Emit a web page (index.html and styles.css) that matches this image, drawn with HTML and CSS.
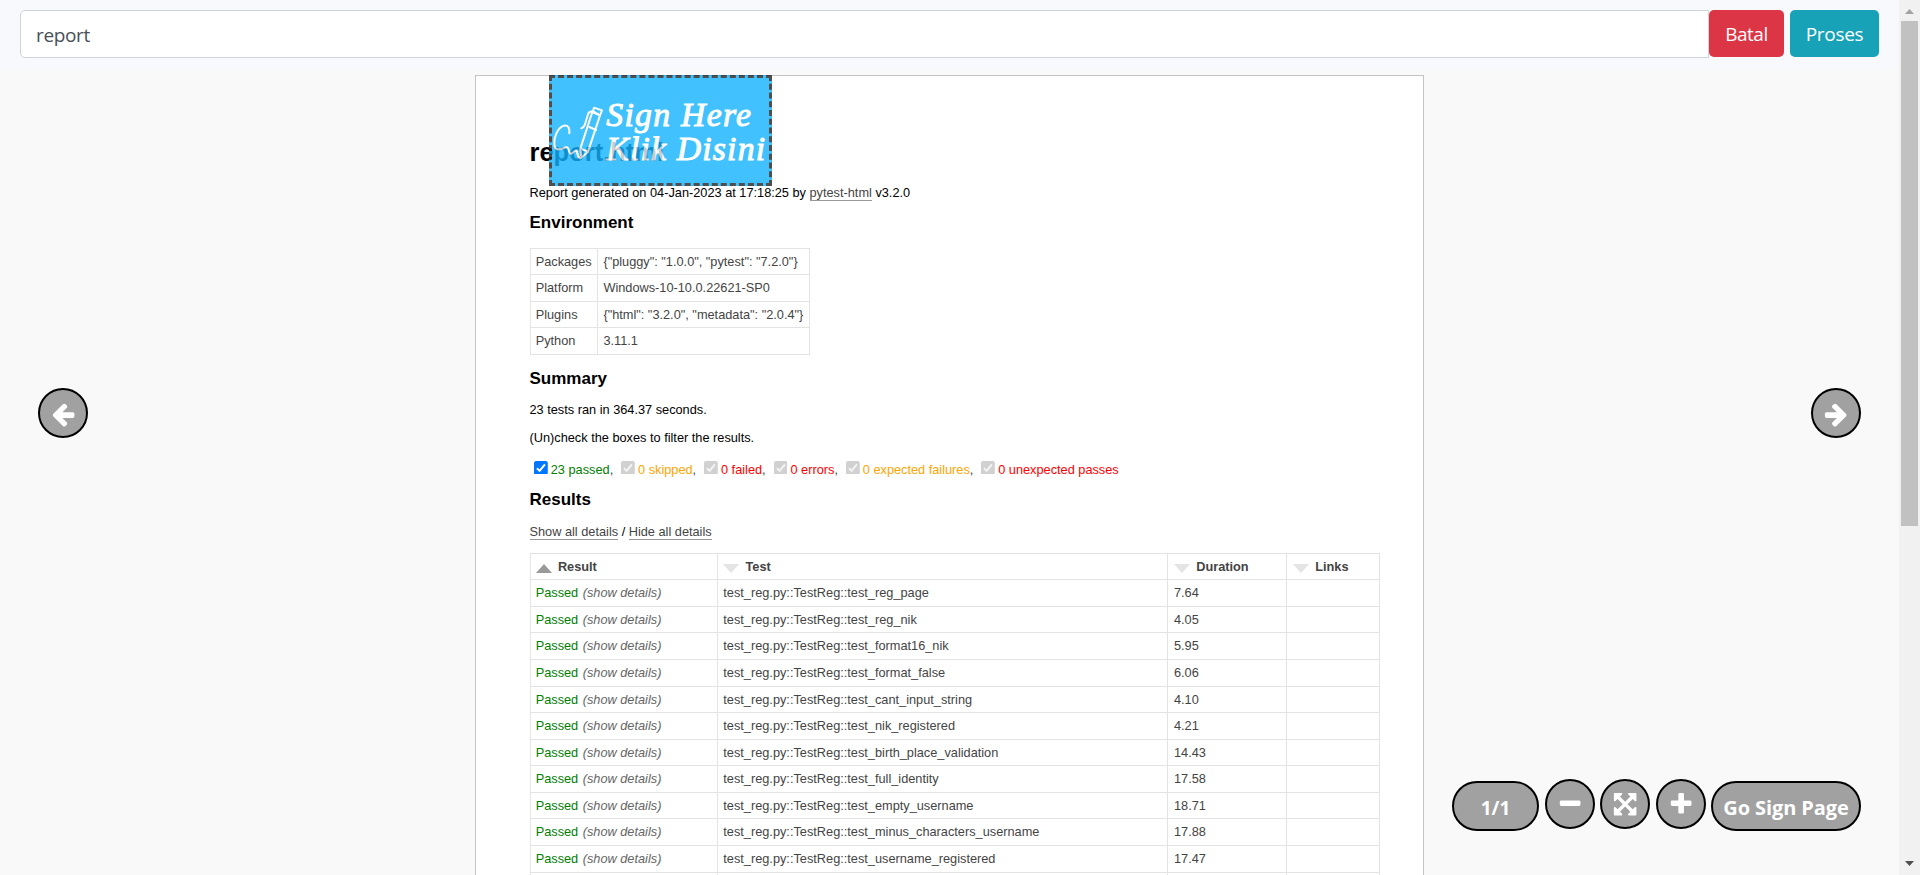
FILE: index.html
```html
<!DOCTYPE html>
<html lang="id">
<head>
<meta charset="utf-8">
<title>report</title>
<link rel="stylesheet" href="styles.css">
</head>
<body>
<div class="app">
  <div class="viewport">
    <form class="toolbar">
      <div class="doc-name"><span class="doc-text">report</span></div>
      <div class="btn btn-danger"><span class="w-batal">Batal</span></div>
      <div class="btn btn-info"><span class="w-proses">Proses</span></div>
    </form>
    <main class="stage">
      <article class="page">
        <h1 class="title">report.html</h1>
        <p class="generated">Report generated on 04-Jan-2023 at 17:18:25 by <span class="link">pytest-html</span> v3.2.0</p>
        <h2 class="h-env">Environment</h2>
        <div class="grid env">
          <div class="row"><span>Packages</span><span>{"pluggy": "1.0.0", "pytest": "7.2.0"}</span></div>
          <div class="row"><span>Platform</span><span>Windows-10-10.0.22621-SP0</span></div>
          <div class="row"><span>Plugins</span><span>{"html": "3.2.0", "metadata": "2.0.4"}</span></div>
          <div class="row"><span>Python</span><span>3.11.1</span></div>
        </div>
        <h2 class="h-sum">Summary</h2>
        <p class="ran">23 tests ran in 364.37 seconds.</p>
        <p class="hint">(Un)check the boxes to filter the results.</p>
        <div class="filters">
          <svg class="cb on" viewBox="0 0 13 13"><rect width="13" height="13" rx="2"/><path d="M2.8 6.8 5.3 9.3 10.3 3.2"/></svg><span class="passed">23 passed</span>,
          <svg class="cb" viewBox="0 0 13 13"><rect width="13" height="13" rx="2"/><path d="M2.8 6.8 5.3 9.3 10.3 3.2"/></svg><span class="skipped">0 skipped</span>,
          <svg class="cb" viewBox="0 0 13 13"><rect width="13" height="13" rx="2"/><path d="M2.8 6.8 5.3 9.3 10.3 3.2"/></svg><span class="failed">0 failed</span>,
          <svg class="cb" viewBox="0 0 13 13"><rect width="13" height="13" rx="2"/><path d="M2.8 6.8 5.3 9.3 10.3 3.2"/></svg><span class="failed">0 errors</span>,
          <svg class="cb" viewBox="0 0 13 13"><rect width="13" height="13" rx="2"/><path d="M2.8 6.8 5.3 9.3 10.3 3.2"/></svg><span class="skipped">0 expected failures</span>,
          <svg class="cb" viewBox="0 0 13 13"><rect width="13" height="13" rx="2"/><path d="M2.8 6.8 5.3 9.3 10.3 3.2"/></svg><span class="failed">0 unexpected passes</span>
        </div>
        <h2 class="h-res">Results</h2>
        <p class="toggles"><span class="link">Show all details</span> / <span class="link">Hide all details</span></p>
        <div class="grid results">
          <div class="row head"><span><i class="tri up"></i>Result</span><span><i class="tri"></i>Test</span><span><i class="tri"></i>Duration</span><span><i class="tri"></i>Links</span></div>
          <div class="row"><span><b>Passed</b><em>(show details)</em></span><span>test_reg.py::TestReg::test_reg_page</span><span>7.64</span><span></span></div>
          <div class="row"><span><b>Passed</b><em>(show details)</em></span><span>test_reg.py::TestReg::test_reg_nik</span><span>4.05</span><span></span></div>
          <div class="row"><span><b>Passed</b><em>(show details)</em></span><span>test_reg.py::TestReg::test_format16_nik</span><span>5.95</span><span></span></div>
          <div class="row"><span><b>Passed</b><em>(show details)</em></span><span>test_reg.py::TestReg::test_format_false</span><span>6.06</span><span></span></div>
          <div class="row"><span><b>Passed</b><em>(show details)</em></span><span>test_reg.py::TestReg::test_cant_input_string</span><span>4.10</span><span></span></div>
          <div class="row"><span><b>Passed</b><em>(show details)</em></span><span>test_reg.py::TestReg::test_nik_registered</span><span>4.21</span><span></span></div>
          <div class="row"><span><b>Passed</b><em>(show details)</em></span><span>test_reg.py::TestReg::test_birth_place_validation</span><span>14.43</span><span></span></div>
          <div class="row"><span><b>Passed</b><em>(show details)</em></span><span>test_reg.py::TestReg::test_full_identity</span><span>17.58</span><span></span></div>
          <div class="row"><span><b>Passed</b><em>(show details)</em></span><span>test_reg.py::TestReg::test_empty_username</span><span>18.71</span><span></span></div>
          <div class="row"><span><b>Passed</b><em>(show details)</em></span><span>test_reg.py::TestReg::test_minus_characters_username</span><span>17.88</span><span></span></div>
          <div class="row"><span><b>Passed</b><em>(show details)</em></span><span>test_reg.py::TestReg::test_username_registered</span><span>17.47</span><span></span></div>
          <div class="row"><span></span><span></span><span></span><span></span></div>
        </div>
        <div class="sign-box">
          <svg class="sign-art" viewBox="9 9 651 315">
            <g class="pen">
              <path d="M61 175C63 156 55 150 45 152C25 158 14 188 16 208C18 228 32 224 42 220C56 212 58 218 61 231C66 246 76 224 82 227C86 230 84 246 94 250"/>
              <path d="M131 108 94 221 97 248 117 230 153 121Z"/>
              <path d="M135 98 159 106 153 121 131 112Z"/>
              <path d="M121 156 141 165M94 221 117 230M131 110Q120 108 117 118L108 148Q105 158 97 160"/>
            </g>
            <text class="sign-text" x="172" y="152" textLength="434" lengthAdjust="spacing">Sign Here</text>
            <text class="sign-text" x="172" y="255" textLength="476" lengthAdjust="spacing">Klik Disini</text>
          </svg>
        </div>
      </article>
    </main>
    <div class="round nav-prev"><svg class="fa" viewBox="0 0 1792 1792"><path d="M1664 896v128q0 53-32.500 90.500t-84.500 37.500h-704l293 294q38 36 38 90t-38 90l-75 76q-37 37-90 37-52 0-91-37l-651-652q-37-37-37-90 0-52 37-91l651-650q38-38 91-38 52 0 90 38l75 74q38 38 38 91t-38 91l-293 293h704q52 0 84.500 37.500t32.500 90.500z"/></svg></div>
    <div class="round nav-next"><svg class="fa" viewBox="0 0 1792 1792"><path d="M1600 960q0 54-37 91l-651 651q-39 37-91 37-51 0-90-37l-75-75q-38-38-38-91t38-91l293-293h-704q-52 0-84.500-37.500t-32.500-90.500v-128q0-53 32.500-90.500t84.500-37.500h704l-293-294q-38-36-38-90t38-90l75-75q38-38 90-38 53 0 91 38l651 651q37 35 37 90z"/></svg></div>
    <div class="controls">
      <div class="pill pill-count"><span class="w-count">1/1</span></div>
      <div class="round c-minus"><svg class="fa" viewBox="0 0 1792 1792"><path d="M1600 736v192q0 40-28 68t-68 28h-1216q-40 0-68-28t-28-68v-192q0-40 28-68t68-28h1216q40 0 68 28t28 68z"/></svg></div>
      <div class="round c-fit"><svg class="fa" viewBox="0 0 1792 1792"><path d="M1411 541l-355 355 355 355 144-144q29-31 70-14 39 17 39 59v448q0 26-19 45t-45 19h-448q-42 0-59-40-17-39 14-69l144-144-355-355-355 355 144 144q31 30 14 69-17 40-59 40h-448q-26 0-45-19t-19-45v-448q0-42 40-59 39-17 69 14l144 144 355-355-355-355-144 144q-19 19-45 19-12 0-24-5-40-17-40-59v-448q0-26 19-45t45-19h448q42 0 59 40 17 39-14 69l-144 144 355 355 355-355-144-144q-31-30-14-69 17-40 59-40h448q26 0 45 19t19 45v448q0 42-39 59-13 5-25 5-26 0-45-19z"/></svg></div>
      <div class="round c-plus"><svg class="fa" viewBox="0 0 1792 1792"><path d="M1600 736v192q0 40-28 68t-68 28h-416v416q0 40-28 68t-68 28h-192q-40 0-68-28t-28-68v-416h-416q-40 0-68-28t-28-68v-192q0-40 28-68t68-28h416v-416q0-40 28-68t68-28h192q40 0 68 28t28 68v416h416q40 0 68 28t28 68z"/></svg></div>
      <div class="pill pill-go"><span class="w-go">Go Sign Page</span></div>
    </div>
  </div>
  <div class="scrollbar">
    <svg class="sb-arrow" viewBox="0 0 21 21"><path fill="#a3a3a3" d="M6 14 10.500 9 15 14Z"/></svg>
    <div class="thumb"></div>
    <svg class="sb-arrow sb-down" viewBox="0 0 21 21"><path fill="#505050" d="M6 7 10.500 12 15 7Z"/></svg>
  </div>
</div>
</body>
</html>
```
FILE: styles.css
```css
* { box-sizing: border-box; }
body { margin: 0; height: 875px; overflow: hidden; background: #f9f9f9; }
.app { display: flex; height: 875px; }
.viewport { position: relative; flex: 1; height: 875px; overflow: hidden; }

.toolbar {
  display: flex; align-items: flex-start; height: 69px; padding: 10px 20px 0;
  background: #f8f9fc; font: 20px "Open Sans", "Noto Sans", sans-serif;
}
.doc-name {
  flex: 1; height: 48px; padding-left: 15px; line-height: 48px;
  background: #fff; border: 1px solid #ced4da; border-radius: 5px 0 0 5px; color: #495057;
}
.doc-text { display: block; font-size: 19px; letter-spacing: -0.35px; }
.btn { height: 47px; line-height: 49px; border-radius: 5px; color: #fff; text-align: center; font-size: 19px; }
.btn-danger { width: 75px; background: #dc3545; }
.btn-info { width: 89px; margin-left: 6px; background: #17a2b8; }
.w-batal { letter-spacing: -0.5px; }
.w-proses { letter-spacing: -0.3px; }

.stage { display: flex; padding: 6px 0 0 475px; }
.page {
  position: relative; width: 949px; height: 1200px; flex: none; padding: 61px 0 0 53.500px;
  background: #fff; border: 1px solid #c4c4c4;
  font: 12.750px/20px "Liberation Sans", Arial, sans-serif; color: #000;
}
.page h1, .page h2, .page p { margin: 0; }
.page .title { font-size: 25.500px; line-height: 30px; }
.page h2 { font-size: 17px; line-height: 20px; }
.page .generated { margin-top: 16px; }
.page .h-env { margin-top: 9.700px; }
.page .h-sum { margin-top: 13.600px; }
.page .ran { margin-top: 11.200px; }
.page .hint { margin-top: 7.700px; }
.page .h-res { margin-top: 10.500px; }
.page .toggles { margin-top: 11.700px; }
.link { color: #444; border-bottom: 1px solid #999; display: inline-block; line-height: 14px; }

.grid { border-top: 1px solid #e3e3e3; border-left: 1px solid #e6e6e6; color: #444; }
.row { display: grid; height: 26.570px; line-height: 25.570px; border-bottom: 1px solid #e3e3e3; }
.row > span { padding-left: 5.800px; border-right: 1px solid #e3e3e3; white-space: nowrap; }
.row > span:first-child { padding-left: 5.200px; }
.env { width: 280.500px; margin-top: 15.100px; }
.env .row { grid-template-columns: 67.700px 1fr; }
.env .row > span:last-child { padding-left: 5.200px; }
.results { width: 850px; margin-top: 10.700px; }
.results .row { grid-template-columns: 187px 450.700px 119px 1fr; }
.row b { font-weight: normal; color: #008000; }
.row em { margin-left: 4.500px; color: #666; }
.row.head { font-weight: bold; }
.row.head span { display: flex; align-items: center; }
.tri { margin: 3px 6.200px 0 0; border: 8.500px solid transparent; border-top: 9px solid #e4e4e4; border-bottom: 0; }
.tri.up { border-top: 0; border-bottom: 9px solid #999; }

.filters { height: 20px; margin-top: 12.400px; white-space: nowrap; color: #444; }
.cb { width: 13.800px; height: 13.800px; margin: 0 3.100px 0 4.400px; vertical-align: -0.500px; }
.cb rect { fill: #d1d1d1; }
.cb path { fill: none; stroke: #f4f4f4; stroke-width: 1.900; }
.cb.on rect { fill: #0075ff; }
.cb.on path { stroke: #fff; }
.passed { color: #008000; }
.skipped { color: #ffa500; }
.failed { color: #f00; }

.sign-box {
  position: absolute; left: 73px; top: -1px; width: 223px; height: 111px;
  background: #13b2ff; border: 3px dashed #222; opacity: 0.8;
}
.sign-art { display: block; width: 217px; height: 105px; }
.pen { fill: none; stroke: #fff; stroke-width: 6; stroke-linejoin: round; stroke-linecap: round; }
.sign-text { font: italic 101px "Liberation Serif", serif; fill: #fff; stroke: #fff; stroke-width: 3; }

.round, .pill {
  display: flex; align-items: center; justify-content: center;
  height: 50px; background: #a1a1a1; border: 2px solid #000; border-radius: 25px;
  color: #fff; font: bold 19px "Open Sans", "Noto Sans", sans-serif; white-space: nowrap;
}
.round { width: 50px; }
.fa { width: 26.300px; height: 26.300px; margin-top: 2px; fill: #fff; }
.nav-prev { position: absolute; left: 38px; top: 388px; }
.nav-next { position: absolute; right: 38px; top: 388px; }
.controls { position: absolute; right: 38px; bottom: 44px; display: flex; align-items: flex-start; }
.controls .fa { margin-top: 1px; }
.pill { margin-top: 2px; }
.pill-count { width: 87px; margin-right: 6px; }
.c-fit { margin-left: 5px; }
.c-plus { margin: 0 5px 0 6px; }
.pill-go { width: 150px; font-size: 20px; }
.w-go { letter-spacing: -0.1px; padding-top: 3px; }
.w-count { padding-top: 3px; }

.scrollbar { display: flex; flex-direction: column; width: 21px; height: 875px; background: #f1f1f1; }
.sb-arrow { width: 21px; height: 21px; }
.thumb { width: 17px; height: 505px; margin-left: 2px; background: #c1c1c1; }
.sb-down { margin-top: auto; }
```
